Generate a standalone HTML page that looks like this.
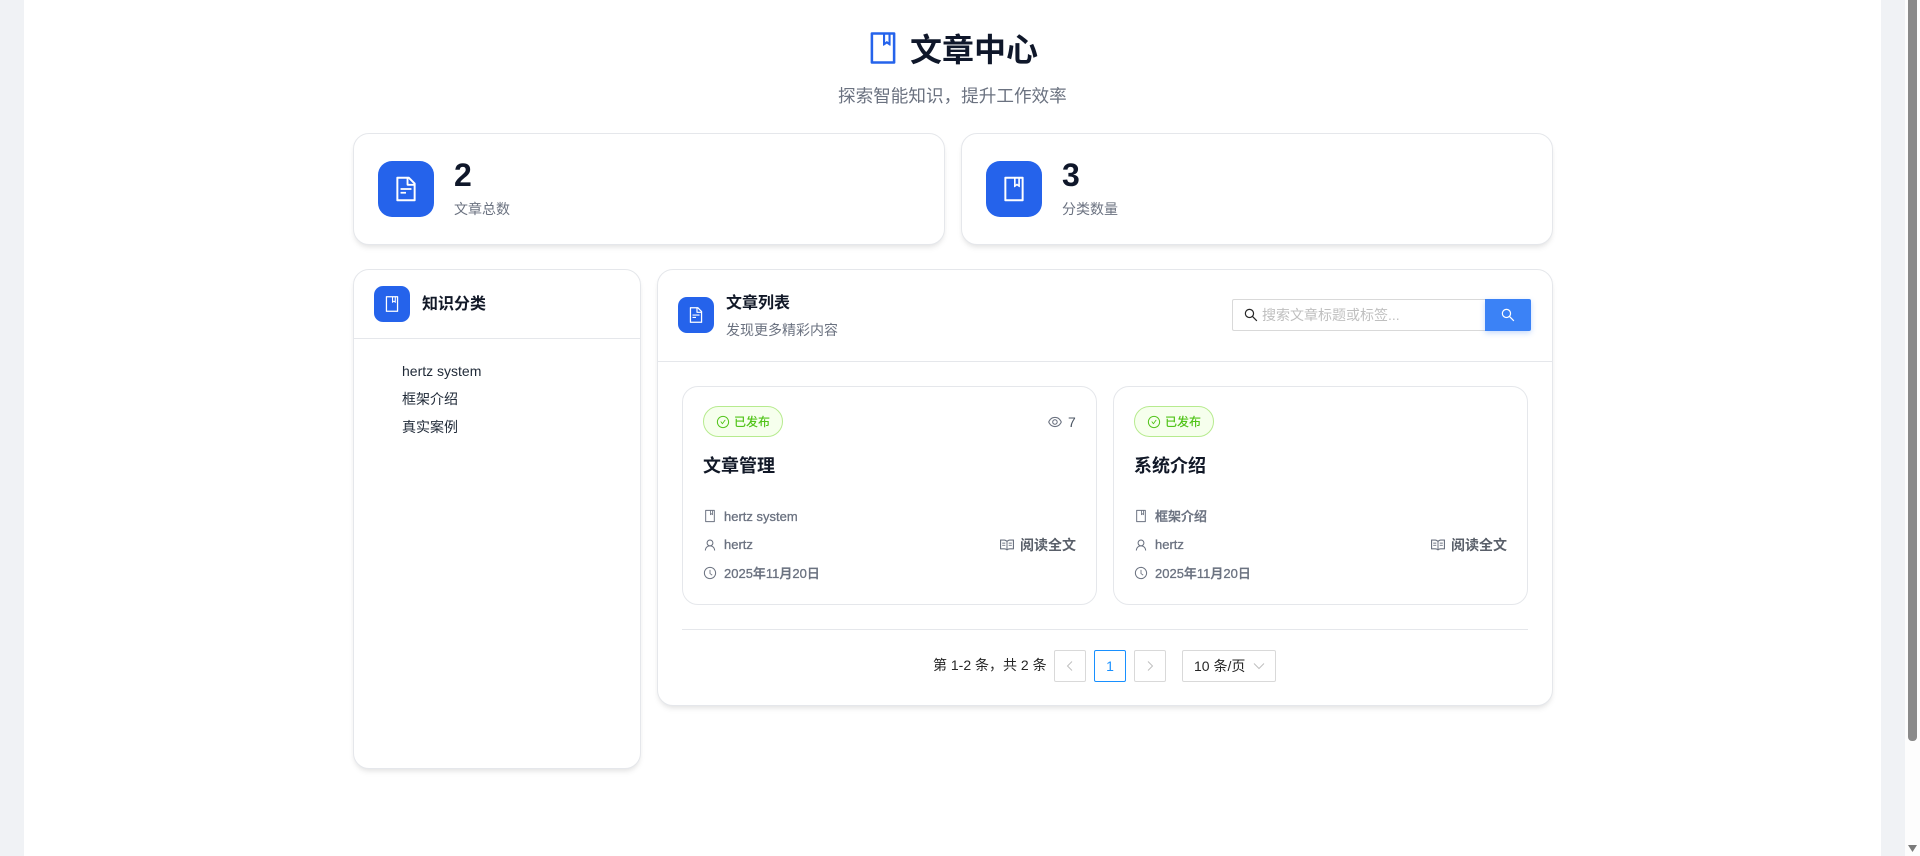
<!DOCTYPE html>
<html lang="zh-CN">
<head>
<meta charset="utf-8">
<title>文章中心</title>
<style>
html,body{margin:0;padding:0;width:1920px;height:856px;overflow:hidden;background:#fff}
body{position:relative;font-family:"Liberation Sans","Noto Sans CJK SC",sans-serif;color:#0f172a}
.a{position:absolute;box-sizing:border-box}
.t{position:absolute;white-space:nowrap;line-height:24px;height:24px}
.card{position:absolute;box-sizing:border-box;background:#fff;border:1px solid #e5e7eb;border-radius:16px;box-shadow:0 4px 6px -1px rgba(0,0,0,.08),0 2px 4px -1px rgba(0,0,0,.04)}
.ac{position:absolute;box-sizing:border-box;background:#fff;border:1px solid #e5e7eb;border-radius:16px}
.ib{position:absolute;background:#2563eb;display:flex;align-items:center;justify-content:center;color:#fff}
svg{display:block;fill:currentColor}
.ic{position:absolute}
.g{color:#6b7280}
.m{font-size:13px;color:#6b7280;font-weight:500;-webkit-text-stroke:.3px #6b7280}
.b{font-weight:700}
.pg{position:absolute;box-sizing:border-box;top:650px;width:32px;height:32px;border:1px solid #d9d9d9;border-radius:2px;background:#fff;display:flex;align-items:center;justify-content:center}
</style>
</head>
<body>
<svg width="0" height="0" style="position:absolute">
<defs>
<symbol id="book" viewBox="0 0 1024 1024"><path d="M832 64H192c-17.7 0-32 14.3-32 32v832c0 17.7 14.3 32 32 32h640c17.7 0 32-14.3 32-32V96c0-17.7-14.3-32-32-32zm-260 72h96v209.9L621.5 312 572 347.4V136zm220 752H232V136h280v296.9c0 3.3 1 6.6 3 9.3a15.9 15.9 0 0022.3 3.7l83.8-59.9 81.4 59.4c2.7 2 6 3.1 9.4 3.1 8.8 0 16-7.2 16-16V136h64v752z"/></symbol>
<symbol id="file" viewBox="0 0 1024 1024"><path d="M854.6 288.6L639.4 73.4c-6-6-14.1-9.4-22.6-9.4H192c-17.7 0-32 14.3-32 32v832c0 17.7 14.3 32 32 32h640c17.7 0 32-14.3 32-32V311.3c0-8.5-3.4-16.7-9.4-22.7zM790.2 326H602V137.8L790.2 326zm1.8 562H232V136h302v216a42 42 0 0042 42h216v494zM504 618H320c-4.4 0-8 3.6-8 8v48c0 4.4 3.6 8 8 8h184c4.4 0 8-3.6 8-8v-48c0-4.4-3.6-8-8-8zM312 490v48c0 4.4 3.6 8 8 8h384c4.4 0 8-3.6 8-8v-48c0-4.4-3.6-8-8-8H320c-4.4 0-8 3.6-8 8z"/></symbol>
<symbol id="search" viewBox="0 0 1024 1024"><path d="M909.6 854.5L649.9 594.8C690.2 542.7 712 479 712 412.6c0-79.5-31-154-87.2-210.2S493.1 115 413.6 115 259.6 146 203.4 202.2 116 334 116 413.5c0 79.4 31.1 154.1 87.3 210.3C259.5 680 334.1 711 413.6 711c66.4 0 129.9-21.7 182-61.9l259.7 259.6a8.2 8.2 0 0011.6 0l43.6-43.5a8.2 8.2 0 000-11.6zM570.4 570.4C528.3 612.4 472.7 635 413.6 635s-114.7-23-156.8-64.6C214.7 528.3 192 472.7 192 413.5s23-114.7 64.8-156.8C298.9 214.6 354.5 192 413.6 192s114.7 22.7 156.8 64.7C612.4 298.8 635 354.4 635 413.5s-22.7 114.9-64.6 156.9z"/></symbol>
<symbol id="check" viewBox="0 0 1024 1024"><path d="M699 353h-46.9c-10.2 0-19.9 4.9-25.9 13.3L469 584.3l-71.2-98.8c-6-8.3-15.6-13.3-25.9-13.3H325c-6.5 0-10.3 7.4-6.5 12.7l124.6 172.8a31.8 31.8 0 0051.7 0l210.6-292c3.9-5.3.1-12.7-6.4-12.7z"/><path d="M512 64C264.6 64 64 264.6 64 512s200.6 448 448 448 448-200.6 448-448S759.4 64 512 64zm0 820c-205.4 0-372-166.6-372-372s166.6-372 372-372 372 166.6 372 372-166.6 372-372 372z"/></symbol>
<symbol id="eye" viewBox="0 0 1024 1024"><path d="M942.2 486.2C847.4 286.5 704.1 186 512 186c-192.2 0-335.4 100.5-430.2 300.3a60.3 60.3 0 000 51.5C176.6 737.5 319.9 838 512 838c192.2 0 335.4-100.5 430.2-300.3 7.7-16.2 7.7-35 0-51.5zM512 766c-161.3 0-279.4-81.8-362.7-254C232.6 339.8 350.7 258 512 258c161.3 0 279.4 81.8 362.7 254C791.5 684.2 673.4 766 512 766zm-4-430c-97.2 0-176 78.8-176 176s78.8 176 176 176 176-78.8 176-176-78.8-176-176-176zm0 288c-61.9 0-112-50.1-112-112s50.1-112 112-112 112 50.1 112 112-50.1 112-112 112z"/></symbol>
<symbol id="user" viewBox="0 0 1024 1024"><path d="M858.5 763.6a374 374 0 00-80.6-119.5 375.63 375.63 0 00-119.5-80.6c-.4-.2-.8-.3-1.2-.5C719.5 518 760 444.7 760 362c0-137-111-248-248-248S264 225 264 362c0 82.7 40.5 156 102.8 201.1-.4.2-.8.3-1.2.5-44.8 18.9-85 46-119.5 80.6a375.63 375.63 0 00-80.6 119.5A371.7 371.7 0 00136 901.8a8 8 0 008 8.2h60c4.4 0 7.9-3.5 8-7.8 2-77.2 33-149.5 87.8-204.3 56.7-56.7 132-87.9 212.2-87.9s155.5 31.2 212.2 87.9C779 752.7 810 825 812 902.2c.1 4.4 3.6 7.8 8 7.8h60a8 8 0 008-8.2c-1-47.8-10.9-94.3-29.5-138.2zM512 534c-45.9 0-89.1-17.9-121.6-50.4S340 407.9 340 362c0-45.9 17.9-89.1 50.4-121.6S466.1 190 512 190s89.1 17.9 121.6 50.4S684 316.1 684 362c0 45.9-17.9 89.1-50.4 121.6S557.9 534 512 534z"/></symbol>
<symbol id="clock" viewBox="0 0 1024 1024"><path d="M512 64C264.6 64 64 264.6 64 512s200.6 448 448 448 448-200.6 448-448S759.4 64 512 64zm0 820c-205.4 0-372-166.6-372-372s166.6-372 372-372 372 166.6 372 372-166.6 372-372 372z"/><path d="M686.7 638.6L544.1 535.5V288c0-4.4-3.6-8-8-8H488c-4.4 0-8 3.6-8 8v275.4c0 2.6 1.2 5 3.3 6.5l165.4 120.6c3.6 2.6 8.6 1.8 11.2-1.7l28.6-39c2.6-3.7 1.8-8.7-1.8-11.2z"/></symbol>
<symbol id="read" viewBox="0 0 1024 1024"><path d="M928 161H699.2c-49.1 0-97.1 14.1-138.4 40.7L512 233l-48.8-31.3A255.2 255.2 0 00324.8 161H96c-17.7 0-32 14.3-32 32v568c0 17.7 14.3 32 32 32h228.8c49.1 0 97.1 14.1 138.4 40.7l44.4 28.6c1.3.8 2.8 1.3 4.3 1.3s3-.4 4.3-1.3l44.4-28.6C602 807.1 650.1 793 699.2 793H928c17.7 0 32-14.3 32-32V193c0-17.7-14.3-32-32-32zM324.8 721H136V233h188.8c35.4 0 69.8 10.1 99.5 29.2l48.8 31.3 6.9 4.5v462c-47.6-25.6-100.8-39-155.2-39zm563.2 0H699.2c-54.4 0-107.6 13.4-155.2 39V298l6.9-4.5 48.8-31.3c29.7-19.1 64.1-29.2 99.5-29.2H888v488z"/><path d="M396.9 361H211.1c-3.9 0-7.1 3.4-7.1 7.5v45c0 4.1 3.2 7.5 7.1 7.5h185.7c3.9 0 7.1-3.4 7.1-7.5v-45c.1-4.1-3.1-7.5-7-7.5zm223.1 7.5v45c0 4.1 3.2 7.5 7.1 7.5h185.7c3.9 0 7.1-3.4 7.1-7.5v-45c0-4.1-3.2-7.5-7.1-7.5H627.1c-3.9 0-7.1 3.4-7.1 7.5zM396.9 501H211.1c-3.9 0-7.1 3.4-7.1 7.5v45c0 4.1 3.2 7.5 7.1 7.5h185.7c3.9 0 7.1-3.4 7.1-7.5v-45c.1-4.1-3.1-7.5-7-7.5zm416 0H627.1c-3.9 0-7.1 3.4-7.1 7.5v45c0 4.1 3.2 7.5 7.1 7.5h185.7c3.9 0 7.1-3.4 7.1-7.5v-45c.1-4.1-3.1-7.5-7-7.5z"/></symbol>
</defs>
</svg>

<!-- page gutters & scrollbar -->
<div class="a" style="left:0;top:0;width:24px;height:856px;background:#f0f2f5"></div>
<div class="a" style="left:1881px;top:0;width:24px;height:856px;background:#f0f2f5"></div>
<div class="a" style="left:1905px;top:0;width:15px;height:856px;background:#fdfdfd"></div>
<div class="a" style="left:1908px;top:-10px;width:9px;height:751px;background:#8a8a8a;border-radius:0 0 4px 4px"></div>
<svg class="ic" style="left:1908px;top:845px" width="9" height="7" viewBox="0 0 9 7"><path fill="#7a7a7a" d="M0 0h9L4.5 7z"/></svg>

<!-- header -->
<svg class="ic" style="left:865px;top:30px;color:#2563eb" width="36" height="36"><use href="#book"/></svg>
<div class="t b" style="left:910px;top:29px;font-size:32px;line-height:42px;height:42px;color:#0f172a">文章中心</div>
<div class="t g" style="left:838px;top:84px;font-size:17.6px">探索智能知识，提升工作效率</div>

<!-- stat cards -->
<div class="card" style="left:353px;top:133px;width:592px;height:112px"></div>
<div class="ib" style="left:378px;top:161px;width:56px;height:56px;border-radius:14px"><svg width="28" height="28"><use href="#file"/></svg></div>
<div class="t b" style="left:454px;top:156px;font-size:32px;line-height:38px;height:38px">2</div>
<div class="t g" style="left:454px;top:197px;font-size:14px">文章总数</div>

<div class="card" style="left:961px;top:133px;width:592px;height:112px"></div>
<div class="ib" style="left:986px;top:161px;width:56px;height:56px;border-radius:14px"><svg width="28" height="28"><use href="#book"/></svg></div>
<div class="t b" style="left:1062px;top:156px;font-size:32px;line-height:38px;height:38px">3</div>
<div class="t g" style="left:1062px;top:197px;font-size:14px">分类数量</div>

<!-- sidebar -->
<div class="card" style="left:353px;top:269px;width:288px;height:500px"></div>
<div class="ib" style="left:374px;top:286px;width:36px;height:36px;border-radius:9px"><svg width="18" height="18"><use href="#book"/></svg></div>
<div class="t b" style="left:422px;top:293px;font-size:16px;color:#111827">知识分类</div>
<div class="a" style="left:354px;top:338px;width:286px;height:1px;background:#e5e7eb"></div>
<div class="t" style="left:402px;top:359px;font-size:14px;color:#1f2937">hertz system</div>
<div class="t" style="left:402px;top:387px;font-size:14px;color:#1f2937">框架介绍</div>
<div class="t" style="left:402px;top:415px;font-size:14px;color:#1f2937">真实案例</div>

<!-- main -->
<div class="card" style="left:657px;top:269px;width:896px;height:437px"></div>
<div class="ib" style="left:678px;top:297px;width:36px;height:36px;border-radius:9px"><svg width="18" height="18"><use href="#file"/></svg></div>
<div class="t b" style="left:726px;top:292px;font-size:16px;color:#111827">文章列表</div>
<div class="t g" style="left:726px;top:318px;font-size:14px">发现更多精彩内容</div>
<div class="a" style="left:658px;top:361px;width:894px;height:1px;background:#e5e7eb"></div>

<!-- search -->
<div class="a" style="left:1232px;top:299px;width:254px;height:32px;border:1px solid #d9d9d9;border-right:0;border-radius:2px 0 0 2px;background:#fff"></div>
<svg class="ic" style="left:1243px;top:307px;color:#262626" width="16" height="16"><use href="#search"/></svg>
<div class="t" style="left:1262px;top:303px;font-size:14px;color:#bfbfbf">搜索文章标题或标签...</div>
<div class="a" style="left:1485px;top:299px;width:46px;height:32px;background:#3b82f6;border-radius:0 2px 2px 0;box-shadow:0 2px 6px rgba(59,130,246,.3);display:flex;align-items:center;justify-content:center;color:#fff"><svg width="16" height="16"><use href="#search"/></svg></div>

<!-- article 1 -->
<div class="ac" style="left:682px;top:386px;width:415px;height:219px"></div>
<div class="a" style="left:703px;top:406px;width:80px;height:31px;background:#f6ffed;border:1px solid #b7eb8f;border-radius:16px"></div>
<svg class="ic" style="left:716px;top:415px;color:#52c41a" width="14" height="14"><use href="#check"/></svg>
<div class="t" style="left:734px;top:410px;font-size:12px;font-weight:500;color:#52c41a">已发布</div>
<svg class="ic" style="left:1047px;top:414px;color:#6b7280" width="16" height="16"><use href="#eye"/></svg>
<div class="t" style="left:1068px;top:410px;font-size:14px;color:#4b5563">7</div>
<div class="t b" style="left:703px;top:454px;font-size:18px;color:#111827">文章管理</div>
<svg class="ic" style="left:703px;top:509px;color:#6b7280" width="14" height="14"><use href="#book"/></svg>
<div class="t m" style="left:724px;top:505px">hertz system</div>
<svg class="ic" style="left:703px;top:538px;color:#6b7280" width="14" height="14"><use href="#user"/></svg>
<div class="t m" style="left:724px;top:533px">hertz</div>
<svg class="ic" style="left:703px;top:566px;color:#6b7280" width="14" height="14"><use href="#clock"/></svg>
<div class="t m" style="left:724px;top:562px">2025年11月20日</div>
<svg class="ic" style="left:999px;top:537px;color:#6b7280" width="16" height="16"><use href="#read"/></svg>
<div class="t b" style="left:1020px;top:533px;font-size:14px;color:#595f69">阅读全文</div>

<!-- article 2 -->
<div class="ac" style="left:1113px;top:386px;width:415px;height:219px"></div>
<div class="a" style="left:1134px;top:406px;width:80px;height:31px;background:#f6ffed;border:1px solid #b7eb8f;border-radius:16px"></div>
<svg class="ic" style="left:1147px;top:415px;color:#52c41a" width="14" height="14"><use href="#check"/></svg>
<div class="t" style="left:1165px;top:410px;font-size:12px;font-weight:500;color:#52c41a">已发布</div>
<div class="t b" style="left:1134px;top:454px;font-size:18px;color:#111827">系统介绍</div>
<svg class="ic" style="left:1134px;top:509px;color:#6b7280" width="14" height="14"><use href="#book"/></svg>
<div class="t m" style="left:1155px;top:505px">框架介绍</div>
<svg class="ic" style="left:1134px;top:538px;color:#6b7280" width="14" height="14"><use href="#user"/></svg>
<div class="t m" style="left:1155px;top:533px">hertz</div>
<svg class="ic" style="left:1134px;top:566px;color:#6b7280" width="14" height="14"><use href="#clock"/></svg>
<div class="t m" style="left:1155px;top:562px">2025年11月20日</div>
<svg class="ic" style="left:1430px;top:537px;color:#6b7280" width="16" height="16"><use href="#read"/></svg>
<div class="t b" style="left:1451px;top:533px;font-size:14px;color:#595f69">阅读全文</div>

<!-- pagination -->
<div class="a" style="left:682px;top:629px;width:846px;height:1px;background:#e5e7eb"></div>
<div class="t" style="left:933px;top:653px;font-size:14px;color:#262626">第 1-2 条，共 2 条</div>
<div class="pg" style="left:1054px"><svg width="12" height="12" viewBox="0 0 12 12"><path d="M8 1.5L3.5 6 8 10.5" fill="none" stroke="#bfbfbf" stroke-width="1"/></svg></div>
<div class="pg" style="left:1094px;border-color:#1890ff;color:#1890ff;font-size:14px">1</div>
<div class="pg" style="left:1134px"><svg width="12" height="12" viewBox="0 0 12 12"><path d="M4 1.5L8.5 6 4 10.5" fill="none" stroke="#bfbfbf" stroke-width="1"/></svg></div>
<div class="a" style="left:1182px;top:650px;width:94px;height:32px;border:1px solid #d9d9d9;border-radius:2px;background:#fff"></div>
<div class="t" style="left:1194px;top:654px;font-size:14px;color:#262626">10 条/页</div>
<svg class="ic" style="left:1253px;top:660px" width="12" height="12" viewBox="0 0 12 12"><path d="M1 3.5L6 8.5 11 3.5" fill="none" stroke="#bfbfbf" stroke-width="1"/></svg>
</body>
</html>
